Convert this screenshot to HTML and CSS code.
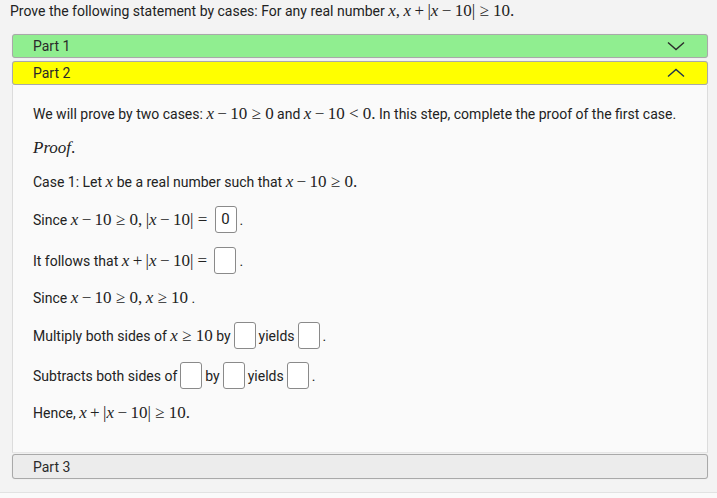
FILE: index.html
```html
<!DOCTYPE html>
<html>
<head>
<meta charset="utf-8">
<link rel="stylesheet" href="styles.css">
</head>
<body>
<div class="page">
  <p class="title">Prove the following statement by cases: For any real number <span class="m mt"><i>x</i>,</span> <span class="m mt"><i>x</i><span class="op">+</span>|<i>x</i><span class="op">−</span>10|<span class="rel">≥</span>10.</span></p>

  <div class="acc">
    <div class="head green"><span>Part 1</span>
      <svg class="chev" width="18" height="10" viewBox="0 0 18 10"><path d="M1 1.5 L9 8.5 L17 1.5" fill="none" stroke="#2b2b2b" stroke-width="1.4"/></svg>
    </div>
    <div class="head yellow"><span>Part 2</span>
      <svg class="chev" width="18" height="10" viewBox="0 0 18 10"><path d="M1 8.5 L9 1.5 L17 8.5" fill="none" stroke="#1d3450" stroke-width="1.4"/></svg>
    </div>
    <div class="panel">
      <p>We will prove by two cases: <span class="m"><i>x</i><span class="op">−</span>10<span class="rel">≥</span>0</span> and <span class="m"><i>x</i><span class="op">−</span>10<span class="rel">&lt;</span>0.</span> In this step, complete the proof of the first case.</p>
      <p><span class="m"><i>Proof</i>.</span></p>
      <p>Case 1: Let <span class="m"><i>x</i></span> be a real number such that <span class="m"><i>x</i><span class="op">−</span>10<span class="rel">≥</span>0.</span></p>
      <p class="bx">Since <span class="m"><i>x</i><span class="op">−</span>10<span class="rel">≥</span>0,</span> <span class="m">|<i>x</i><span class="op">−</span>10|<span class="rel">=</span></span><span class="box">0</span>.</p>
      <p class="bx">It follows that <span class="m"><i>x</i><span class="op">+</span>|<i>x</i><span class="op">−</span>10|<span class="rel">=</span></span><span class="box"></span>.</p>
      <p>Since <span class="m"><i>x</i><span class="op">−</span>10<span class="rel">≥</span>0,</span> <span class="m"><i>x</i><span class="rel">≥</span>10</span> .</p>
      <p class="bx">Multiply both sides of <span class="m"><i>x</i><span class="rel">≥</span>10</span> by<span class="box"></span>yields<span class="box"></span>.</p>
      <p class="bx">Subtracts both sides of<span class="box"></span>by<span class="box"></span>yields<span class="box"></span>.</p>
      <p>Hence, <span class="m"><i>x</i><span class="op">+</span>|<i>x</i><span class="op">−</span>10|<span class="rel">≥</span>10.</span></p>
    </div>
    <div class="head grey"><span>Part 3</span></div>
  </div>
</div>
</body>
</html>
```
FILE: styles.css
```css
html, body {
  margin: 0;
  padding: 0;
  background: #fafafa;
}
body {
  font-family: Roboto, "Noto Sans", sans-serif;
  font-size: 14px;
  color: #222;
}
.page {
  background: #f3f3f3;
  border-bottom: 1px solid #e2e2e2;
  padding: 0 9px 13px 12px;
}
.title {
  margin: 0 0 0 -2px;
  padding-top: 1px;
  font-size: 14px;
  line-height: 19px;
  height: 33px;
}
.m {
  font-family: "Liberation Serif", "DejaVu Serif", serif;
  font-size: 17px;
  white-space: nowrap;
}
.m.mt { font-size: 17px; }
.m i { font-style: italic; }
.op { margin: 0 0.2em; }
.rel { margin: 0 0.25em; }
.acc {
  display: flex;
  flex-direction: column;
}
.head {
  height: 22px;
  border: 1px solid #a9a9a9;
  border-radius: 3px;
  box-shadow: 0 0 1px rgba(0,0,0,0.15);
  display: flex;
  align-items: center;
  justify-content: space-between;
  padding: 0 20px 0 20px;
  color: #2a2a2a;
  font-size: 14px;
}
.head span { line-height: 22px; }
.green { background: #90ee90; }
.yellow { background: #ffff00; margin-top: 3px; }
.grey { background: #ececec; height: 23px; }
.chev { margin-right: 2px; }
.panel {
  background: #fafafa;
  border-left: 1px solid #dcdcdc;
  border-right: 1px solid #dcdcdc;
  border-bottom: 1px solid #e6e6e6;
  padding: 19px 20px 29px 20px;
  margin-bottom: 1px;
}
.panel p {
  margin: 0 0 14px;
  line-height: 20px;
}
.panel p:last-child { margin-bottom: 0; }
.panel p.bx { line-height: 27px; margin-bottom: 13px; }
.box {
  display: inline-block;
  box-sizing: border-box;
  width: 22px;
  height: 27px;
  border: 1px solid #8a8a8a;
  border-radius: 3px;
  background: #fff;
  vertical-align: middle;
  text-align: center;
  line-height: 25px;
  font-size: 15px;
  margin: -3px 3px 0;
}
```
